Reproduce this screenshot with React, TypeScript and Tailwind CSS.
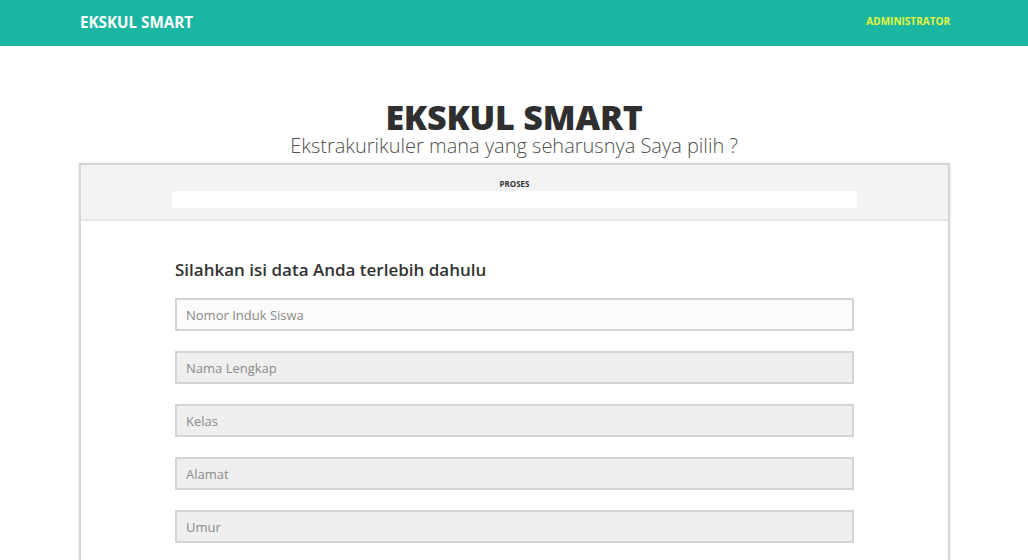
import React from "react";

const fields = [
  { label: "Nomor Induk Siswa", active: true },
  { label: "Nama Lengkap", active: false },
  { label: "Kelas", active: false },
  { label: "Alamat", active: false },
  { label: "Umur", active: false },
];

export default function App() {
  return (
    <div
      className="min-h-[560px] bg-white"
      style={{ fontFamily: '"Open Sans", "Liberation Sans", sans-serif' }}
    >
      {/* Navbar */}
      <nav className="h-[46px] bg-[#1ab6a2] flex items-center justify-between pl-[80px] pr-[78px]">
        <span className="text-white font-bold text-[15.2px] -mt-[1px]">EKSKUL SMART</span>
        <span className="text-[#e4f53c] font-bold text-[10px] -mt-[4px]">ADMINISTRATOR</span>
      </nav>

      {/* Hero */}
      <div className="text-center pt-[55px]">
        <h1 className="text-[34px] leading-[32px] font-extrabold text-[#2f2f2f] tracking-[-0.2px]">EKSKUL SMART</h1>
        <p className="mt-[2px] text-[20px] leading-[22px] font-light text-[#505050]">
          Ekstrakurikuler mana yang seharusnya Saya pilih ?
        </p>
      </div>

      {/* Card */}
      <div className="ml-[79px] mr-[78px] mt-[6px] border-2 border-[#d6d6d6] border-b-0 shadow-[0_0_3px_rgba(0,0,0,0.12)]">
        <div className="bg-[#f3f3f3] border-b-2 border-[#e6e6e6] h-[56px] pt-[13px]">
          <div className="text-center text-[8px] font-bold text-[#333] leading-[12px]">PROSES</div>
          <div className="mx-[91px] mt-[1px] h-[17px] bg-white rounded-[2px]" />
        </div>
        <div className="px-[94px] pt-[37px] pb-[20px]">
          <h2 className="text-[17px] font-semibold text-[#333] leading-[24px] mb-[16px]">
            Silahkan isi data Anda terlebih dahulu
          </h2>
          <div className="flex flex-col gap-[20px]">
            {fields.map((f) => (
              <input
                key={f.label}
                placeholder={f.label}
                className={`h-[33px] w-full border-2 border-[#d4d4d4] px-[9px] text-[13px] text-[#555] placeholder:text-[#8a8a8a] outline-none ${
                  f.active ? "bg-[#fbfbfb]" : "bg-[#efefef]"
                }`}
              />
            ))}
          </div>
        </div>
      </div>
    </div>
  );
}
